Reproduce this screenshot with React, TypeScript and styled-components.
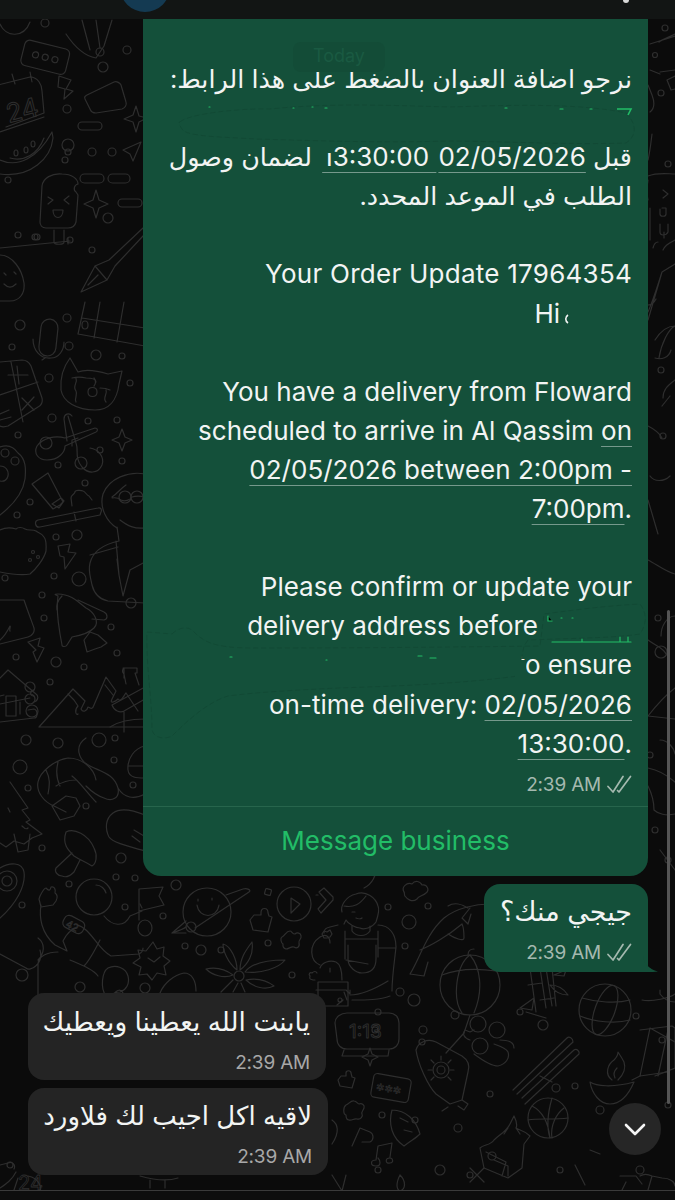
import React from "react";
import styled, { createGlobalStyle } from "styled-components";

const Global = createGlobalStyle`
  html, body { margin: 0; padding: 0; background: #0b0b0b; }
  #root { width: 675px; height: 1200px; overflow: hidden; }
`;

const TEXT_STACK = `Inter, "DejaVu Sans", sans-serif`;
const GREEN = "#14503a";

const Screen = styled.div`
  position: relative;
  width: 675px;
  height: 1200px;
  overflow: hidden;
  background: #0b0b0b;
  display: flex;
  flex-direction: column;
  font-family: ${TEXT_STACK};
`;

const WallpaperArt = styled.svg`
  position: absolute;
  inset: 0;
  width: 675px;
  height: 1200px;
  fill: none;
  stroke: #2e2e2e;
  stroke-width: 1.2;
  stroke-linejoin: round;
  stroke-linecap: round;
`;

const TopBar = styled.header`
  position: relative;
  z-index: 1;
  flex: none;
  height: 19px;
  background: #121514;
  overflow: hidden;
  display: flex;
  justify-content: space-between;
  padding: 0 46px 0 120px;
`;

const Avatar = styled.div`
  width: 50px;
  height: 50px;
  margin-top: -38px;
  border-radius: 50%;
  background: #143a52;
`;

const TopGlyph = styled.div`
  width: 6px;
  height: 3px;
  border-radius: 0 0 3px 3px;
  background: #d8d8d8;
`;

const Thread = styled.main`
  position: relative;
  z-index: 1;
  flex: 1;
  display: flex;
  flex-direction: column;
`;

const Bubble = styled.div<{ $out?: boolean; $w: number; $h: number; $gap: number }>`
  position: relative;
  box-sizing: border-box;
  width: ${(p) => p.$w}px;
  height: ${(p) => p.$h}px;
  margin-top: ${(p) => p.$gap}px;
  margin-left: ${(p) => (p.$out ? "auto" : "28px")};
  margin-right: ${(p) => (p.$out ? "27px" : "0")};
  border-radius: ${(p) => (p.$out ? "16px 16px 4px 16px" : "16px")};
  padding: 8px 16px 0;
  background: ${(p) => (p.$out ? GREEN : "#242424")};
  color: #f2f4f3;
`;

const TemplateBubble = styled.article`
  position: relative;
  width: 505px;
  height: 857px;
  margin-left: 143px;
  border-radius: 0 0 18px 18px;
  background: ${GREEN};
  color: #f2f4f3;
  display: flex;
  flex-direction: column;
`;

const TemplateBody = styled.div`
  flex: 1;
  padding: 40px 16px 0;
`;

const Line = styled.div<{ $track?: number }>`
  height: 39.1px;
  line-height: 39.1px;
  font-size: 26px;
  letter-spacing: ${(p) => p.$track ?? 0}px;
  text-align: right;
  white-space: nowrap;
`;

const ArabicLine = styled(Line)`
  font-size: 25.4px;
`;

const DateLink = styled.span`
  display: inline-block;
  direction: ltr;
  font-size: 26px;
  white-space: pre;
  text-decoration: underline;
  text-decoration-color: rgba(255, 255, 255, 0.42);
  text-decoration-thickness: 1px;
  text-underline-offset: 6px;
`;

const InlineGap = styled.span<{ $w: number }>`
  display: inline-block;
  width: ${(p) => p.$w}px;
`;

const Meta = styled.div<{ $tone: string; $top?: number }>`
  display: flex;
  justify-content: flex-end;
  align-items: center;
  gap: 6px;
  height: 24px;
  margin-top: ${(p) => p.$top ?? 0}px;
  font-size: 19px;
  letter-spacing: -0.2px;
  color: ${(p) => p.$tone};
`;

const ChatText = styled.div<{ $size: number }>`
  height: 40px;
  line-height: 40px;
  font-size: ${(p) => p.$size}px;
  text-align: right;
  white-space: nowrap;
`;

const ActionRow = styled.button`
  flex: none;
  height: 70px;
  padding: 0 0 2px;
  border: 0;
  border-top: 1px solid #27654c;
  background: none;
  color: #22bd67;
  font: 400 26px ${TEXT_STACK};
`;

const TodayChip = styled.div`
  position: absolute;
  left: 150px;
  top: 23px;
  width: 92px;
  height: 30px;
  line-height: 28px;
  text-align: center;
  border-radius: 8px;
  background: #134c37;
  color: #1a5a42;
  font-size: 18px;
`;

const BubbleInk = styled.svg`
  position: absolute;
  left: 0;
  top: 0;
  width: 505px;
  height: 857px;
  pointer-events: none;
`;

const Tail = styled.svg`
  position: absolute;
  right: -11px;
  bottom: 0;
  width: 16px;
  height: 16px;
`;

const BottomBar = styled.footer`
  position: relative;
  z-index: 1;
  flex: none;
  height: 9px;
  border-top: 1px solid #3a3a3a;
  background: #0d0d0d;
`;

const ScrollThumb = styled.div`
  position: absolute;
  z-index: 2;
  right: 5px;
  top: 610px;
  width: 3px;
  height: 494px;
  border-radius: 2px;
  background: #555;
`;

const JumpButton = styled.button`
  position: absolute;
  z-index: 3;
  left: 609px;
  top: 1103px;
  width: 52px;
  height: 52px;
  padding: 0;
  border: 0;
  border-radius: 50%;
  background: #262626;
  display: flex;
  align-items: center;
  justify-content: center;
`;

/* small ring dots scattered between the doodles */
const rings: [number, number, number][] = [
  [45, 23, 4], [100, 52, 4], [127, 50, 4], [103, 67, 5], [67, 109, 4], [68, 145, 6], [68, 152, 3], [92, 152, 4], [112, 152, 4],
  [65, 160, 3], [108, 218, 5], [92, 250, 3], [18, 235, 3], [8, 180, 3], [35, 237, 3], [70, 240, 3], [37, 237, 3],
  [20, 325, 5], [12, 347, 3], [67, 318, 4], [69, 346, 4], [96, 355, 5], [122, 356, 3], [49, 378, 4], [52, 418, 4], [88, 421, 3],
  [117, 420, 3], [100, 450, 3], [18, 435, 3], [122, 461, 3], [58, 465, 3], [85, 483, 3], [30, 502, 3], [17, 515, 3], [130, 383, 3],
  [56, 537, 3], [77, 535, 5], [54, 576, 3], [79, 579, 7], [5, 578, 3], [42, 595, 3], [44, 618, 3], [111, 627, 3], [131, 603, 5], [16, 657, 3],
  [56, 662, 5], [84, 667, 3], [50, 682, 3], [117, 653, 3], [26, 740, 5], [58, 743, 5], [115, 738, 3], [99, 740, 7], [114, 760, 3],
  [20, 767, 7], [28, 788, 3], [133, 785, 3], [86, 806, 3], [42, 848, 3], [121, 858, 5], [116, 877, 3], [135, 878, 3], [69, 884, 3],
  [22, 905, 3], [125, 907, 3], [163, 916, 3], [176, 885, 5], [221, 950, 3], [185, 946, 3], [201, 950, 5], [268, 943, 3], [292, 975, 3],
  [22, 975, 6], [80, 987, 5], [145, 988, 5], [388, 907, 3], [409, 922, 7], [405, 946, 3], [428, 906, 3], [400, 992, 4], [323, 1010, 2],
  [378, 1012, 3], [414, 1000, 6], [423, 1030, 4], [455, 1015, 4], [520, 1012, 3], [543, 1025, 5], [422, 1042, 3], [636, 1016, 3],
  [490, 1094, 3], [556, 1088, 4], [575, 1086, 3], [382, 1115, 3], [415, 1120, 3], [458, 1128, 4], [375, 1030, 3], [600, 1110, 4],
  [378, 1170, 3], [440, 1170, 5], [470, 1175, 3], [560, 1170, 3], [640, 1170, 4], [665, 28, 3], [661, 93, 3], [668, 164, 3], [661, 370, 3], [663, 436, 3],
  [658, 618, 3], [661, 652, 6], [650, 755, 3], [655, 830, 3], [668, 860, 3], [662, 1040, 3], [668, 1105, 3], [10, 1165, 3], [340, 1000, 2],
];

function Wallpaper() {
  return (
    <WallpaperArt viewBox="0 0 675 1200" aria-hidden="true">
      {rings.map(([x, y, r], i) => (
        <circle key={i} cx={x} cy={y} r={r} />
      ))}

      {/* top of the left column */}
      <path d="M0 24c6 14 24 14 30-2M66 34c8 12 18 22 30 24l8-12 8-26M82 20l8 30M96 20l4 28" />
      <g transform="rotate(14 44 58)">
        <rect x="22" y="44" width="46" height="26" rx="5" />
        <circle cx="35" cy="57" r="3" /><circle cx="45" cy="57" r="3" /><circle cx="55" cy="57" r="3" />
      </g>
      <path d="M-2 85l32-8c8 0 12 8 12 14l2 22-38 14M12 74l3 10M30 72l2 10M0 132l44-15" />
      <text x="6" y="120" fontSize="26" fontFamily="Inter, sans-serif" transform="rotate(-14 20 110)" strokeWidth="1">24</text>
      <path d="M59 76l12 4-5 9 7 2-9 8 1-10-7-2z" />
      <path d="M87 95l27-13c3-1 6 1 7 3l5 17c1 3-1 6-4 7l-26 4c-3 0-5-1-6-4l-5-10c-1-2 0-3 2-4z" />
      <path d="M136 106l3 10 8 2-8 4-3 10-3-10-9-3 9-4z" />
      <rect x="78" y="122" width="24" height="8" rx="4" />
      <path d="M0 160c18 8 38-2 52-28l1 6c-2 20-22 40-53 36M10 158c14 4 28-4 34-20" />
      <ellipse cx="16" cy="153" rx="2" ry="3" /><ellipse cx="26" cy="150" rx="2" ry="3" /><ellipse cx="33" cy="144" rx="2" ry="3" />
      <path d="M123 150l18-8-8 19-3-7z" />

      {/* popsicle and sparkle */}
      <path d="M40 222l2-36c1-8 10-13 20-12 10 0 16 5 16 10-4 1-5 6-2 8l2 3-2 27c-1 4-4 6-8 6H46c-4 0-6-3-6-6zM54 230v12c0 3 10 3 10 0v-12" />
      <path d="M48 197l5 3-5 4M69 196l-5 4 5 4M53 210h10c0 10-10 10-10 0z" />
      <path d="M96 190l3 10 9 4-9 4-3 10-3-10-9-4 9-4z" />
      <rect x="80" y="174" width="24" height="9" rx="4.5" /><rect x="108" y="174" width="22" height="9" rx="4.5" />
      <rect x="118" y="199" width="24" height="8" rx="4" />

      {/* fountain pen and smile */}
      <path d="M143 228l-34 32-14 6-14 26 26-12 8-14 28-30M95 266l12 14M88 285l10-10" />
      <path d="M0 255c12 0 22 14 24 28 1 10-4 18-14 18H0M4 273l2 2M14 272l2 2M4 284c4 4 8 4 12 0" />
      <path d="M0 248l70-7M68 244v-6" />

      {/* grid window and microphone */}
      <path d="M78 334l7-32M78 334l67 12M100 302l-6 36M124 302l-7 40M82 318l63 10" />
      <ellipse cx="85" cy="325" rx="3" ry="4" />
      <rect x="40" y="319" width="17" height="37" rx="8.5" transform="rotate(6 48 337)" />
      <path d="M33 339c0 12 8 20 18 19 8 0 13-8 13-16M45 358l-3 2" />

      {/* calculator */}
      <path d="M0 362l22-2c4 0 7 2 9 6l11 32c1 4-1 8-4 9l-30 19c-3 1-6 1-8 0M0 395l38-13M11 362l12 60M8 375h20M17 366l2 18M22 398l12 12M34 397l-12 13M0 414l9-4M0 420l11-3" />

      {/* cat */}
      <path d="M70 358c-6 8-10 20-9 32 2 12 16 20 34 20 14 0 22-10 24-26l3-13-14 3c-10-3-22-5-30-2z" />
      <path d="M72 378c4-1 10-1 14 0M76 378c2 5-4 8 0 13 2 4-2 7 0 11M100 388c4 0 8 1 10 2M106 390c2 4-4 8 0 12M86 378c4 0 10 0 10 4M88 392c0-6 9-6 9 0s-9 6-9 0zM94 378c2 2 2 6 0 8" />

      {/* scissors */}
      <path d="M68 416l8 27c3 8-2 14 6 24 6 7 16 7 20-2 3-8-4-16-12-17M72 416c-3-4-8-2-8 3l3 22" />
      <circle cx="81" cy="463" r="6" />
      <path d="M96 432c2-1 2-4-1-4l-30 10c-10-3-22 0-28 8-4 8 2 14 10 14 12 0 18-8 18-14z" />
      <circle cx="46" cy="443" r="6" />
      <path d="M72 446v-6l6-2" />
      <path d="M122 429l3 8 7 3-7 3-3 8-3-8-7-3 7-3z" />

      {/* paw */}
      <path d="M0 447c8-3 14 0 18 6 8 6 8 16 7 26-2 14-12 26-25 36" />
      <circle cx="5" cy="453" r="4" /><circle cx="15" cy="461" r="4" /><path d="M0 466c6 0 9 5 8 10-1 4-4 6-8 5" />

      {/* tube and toothbrush */}
      <path d="M32 484l16-11 15 29-3 3-7 4zM52 504l7 4 5-7-3-3z" />
      <path d="M38 520l60-12c3-1 4 2 3 4l-1 3-60 12c-5 1-6-6-2-7zM72 506l-1-8c0-3 3-3 4-6 0-2 6-2 8-1 3 1 3 4 6 5l3 4M74 512l2 9" />

      {/* man with glasses */}
      <path d="M145 474c-16-3-36 4-42 20-4 14 4 28 14 34M112 497c6-4 8-8 14-12M112 498c5-1 9 2 9 2 4 2 9 0 11-3 3-1 9-1 13 0M120 520c8 6 14 9 25 8" />
      <circle cx="125" cy="497" r="6" /><circle cx="137" cy="497" r="6" />
      <path d="M117 527l2 14c-14 3-26 10-29 22-2 8 0 12 2 22 2 8 6 14 16 16l37 2M90 555l28-8M116 541l3 34 4 21 7-26 15-8M119 575l-2-16" />

      {/* taco and bolt */}
      <path d="M0 530c4-2 10-3 16-1 2-2 6-2 9 0s8 0 11 2c2 2 6 2 8 6 3 4 2 10 2 14-2 8-10 18-16 23-10 2-20 0-30-2" />
      <circle cx="33" cy="552" r="1.5" /><circle cx="38" cy="557" r="1.5" /><circle cx="30" cy="560" r="1.5" />
      <path d="M58 546l12-2-2 8 8 1-11 16-1-12-4-1z" />

      {/* boot */}
      <path d="M0 600h24c4 12 8 22 10 28 1 4-2 8-6 9-8 2-16 4-28 7M0 640c5-4 8-10 10-14 1 0-1 4 0 5" />
      <path d="M28 642l12-4-2 8 6 2-5 10-2 4-4-10 3-2z" />

      {/* rocket */}
      <path d="M58 596c-2 12 0 26 2 38l2 11c0 2 4 2 5 0l5-8c6-1 16-3 22-9 6-6 0-16-8-20-6-4-14-14-28-14-4 0-4 0 0 2zM78 600l26 12c4 2 4 7 0 8l-12-1M90 632l-6 8 3 12 8-3 6-2 6-4-9-8-8-3z" />
      <path d="M62 596c-4 4-6 8-5 14" />

      {/* log cabin */}
      <path d="M0 678l8-8 28 24c3 2 2 7-2 8M34 690c-4 0-5 6 0 6M0 704l30-6M0 722l34-4c4 0 4-8 0-9l-6 1M6 696h10v20H6zM20 702v12M0 696l4-1" />
      <circle cx="30" cy="687" r="5" /><circle cx="32" cy="711" r="6" /><circle cx="30" cy="699" r="5" />

      {/* mountains */}
      <path d="M39 727l34-38 12 12-4 8c2 4 6 2 7-2 2 0 4 4 6-2l12-28 10 14-4 8c-3 6 4 2 6 0 3 4 6-4 8-6l12 18M39 727h106M68 694l6 6 4 6c-4 4-2 10 0 8M105 685l8 10" />
      <path d="M112 705l33-18M112 705c2 6 8 8 12 6l21-12M123 668h14v5h-2l4 12M124 668v10M124 668c-2 2-2 4 0 6l2 10M124 712v20M110 727c6-4 18-8 35-8" />

      {/* swirl and shrimp */}
      <path d="M86 738c-12 8-8 22 4 28 12 6 24 8 28 22 2 10-6 14-14 10-6-2-12-6-18-12M118 788c6 10 16 12 27 6" />
      <path d="M145 746c-10 2-18 12-17 24 1 8 9 8 17 8M128 766h17" />
      <path d="M96 780c-2-12-14-22-28-22-14 2-28 14-30 24-2 10 6 20 16 24l12 6M56 786c6-4 14-6 20-6M46 770c4 8 4 14 2 24M58 762c-2 8-2 16 2 24M72 776c8 6 16 18 24 26M52 806l8 14 14-4 6-10-4-8-10-2z" />

      {/* pine tree */}
      <path d="M10 782l18 26-6 2 8 10-4 2 16 12-10 4-8 6-10-3-8 6-6-4M14 834l4 18 10-2 2-16M8 808l2 4M22 826c2 2 4 4 6 2" />

      {/* mushroom and oval */}
      <path d="M66 832c8-4 22 2 28 16 4 8 2 16-2 18-6-4-12-6-18-10-6-6-12-12-8-24zM72 853l-16 15c-2 4 2 8 6 8 4 2 8 0 12-4l6-12" />
      <path d="M145 815c-12-5-24-8-32-2-8 6-8 16-4 24 4 6 22 10 36 14M132 836l8 6M134 830l10 6" />

      {/* leaf with target */}
      <path d="M0 868c10-6 22-6 24 4 2 14-8 32-24 46" />
      <circle cx="7" cy="881" r="10" /><circle cx="7" cy="881" r="5" />

      {/* astronaut */}
      <circle cx="94" cy="897" r="18" />
      <path d="M96 885c5 0 9 4 10 8M40 896c2-4 4-8 6-8 2 2 4 4 5-1 3-1 5 2 4 6 3 2 2 6 1 8l-3 4-12 2-2-8zM41 905c-2 12 0 28 14 40l12 6-4-10c4-8 8-12 14-13M77 925c14 3 20 24 34 31l28-2c4-2 4-5 4-6M104 916c8 10 20 12 26 0l12-5M142 908l-2-4" />
      <ellipse cx="145" cy="928" rx="7" ry="8" />
      <rect x="63" y="918" width="22" height="13" rx="5" transform="rotate(28 74 924)" />
      <text x="67" y="930" fontSize="10" fontFamily="Inter, sans-serif" transform="rotate(28 74 924)" strokeWidth="0.7">42</text>
      <path d="M70 960c14 6 24 10 28 16M40 950c4 14-10 22-14 18l-26-14M38 938c8 6 6 16 0 22M100 940c-4 8-10 20-16 26M38 1000v-36c0-8 10-12 20-12" />
      <path d="M139 920v-31l24-2-4 9 5 9-25 6" />

      {/* ringed planet */}
      <circle cx="207" cy="912" r="24" />
      <path d="M198 899v2M212 898v2M197 905c2 14 20 14 22 0" />
      <path d="M172 933c6-2 12-4 14-6M195 928l54-36c3-2-2-4-6-3l-17 6M172 933l14-12M172 933h14" />
      <circle cx="191" cy="927" r="5" />
      <path d="M250 920l4-5h7v-2c0-6 7-6 7 0l1 3 3 1-4 15-15-2z" /><rect x="265" y="889" width="6" height="6" rx="1" transform="rotate(16 268 892)" />
      <circle cx="294" cy="904" r="17" /><path d="M291 898l9 6-9 9z" />
      <path d="M319 892l5-4 9 9 0 3-12 13-3-4 8-9-7-8zM318 895h-2" />
      <path d="M282 937c3-1 4-6 8-6 2 0 2 3 5 3 2-2 6-1 6 2 1 3-3 4-2 7 1 4-2 6-5 4-3-1-5 2-8 2-4-1-3-4-3-5-2-1-3-6-1-7z" />
      <path d="M153 942l4 7 7-2-1 9 7 5-6 5 2 9-9-2-5 7-5-6-8 1 2-8-8-4 7-5-2-8 8 1zM148 958l6 4 6-5" />
      <path d="M108 968c8-4 18 0 20 8 2 8-2 14-8 16-4 0-8 2-10 4M108 968c-6 4-8 20-2 28M113 995c4-6 8-6 10-2" />
      <path d="M160 993c4-10 14-18 24-20 8 0 12 8 12 18" />

      {/* flower */}
      <circle cx="239" cy="976" r="5" />
      <path d="M237 970c-10-8-14-20-14-26 8 2 14 16 14 26zM240 970c0-12 6-20 12-28 2 12-4 22-12 28zM245 972c6-8 20-12 40-12-6 8-24 14-40 12zM233 975c-8-6-18-8-27-6 6 6 18 10 27 6zM246 980c10-2 20 0 28 6-8 4-20 2-28-6zM233 980c-4 4-8 8-12 12M238 983l-5 9M241 983l4 9" />

      {/* gardener */}
      <path d="M342 912c-2-6 4-16 14-18 10-4 20 4 22 12 2 4 0 10-2 16-4 6-12 8-16 6-4 0-12-4-14-8l-2 4M344 906c10 2 16-2 22-10M352 912h3M356 918c2 1 5 1 6 0M364 888c8-4 14-14 10-20-2-4-6-4-10-2" />
      <path d="M352 926v5c4 6 14 6 18 0v-5M338 925l-8 2c-4 1-6 2-6 6M378 925c12 0 18 10 18 22-1 10-4 30-4 44M345 931v28M378 931v26M345 939h33M348 945v14c0 8 8 14 14 14 8 0 14-4 14-14v-14M346 960l22 4M378 948l18 0" />
      <path d="M320 965c-10-4-12-20 0-28 6-4 10 0 10 6M324 938l-2-4 2-3 3 1 3-2 2 4-2 3-3 1z" />
      <path d="M320 968c2-6 10-8 16-6 4 2 6 10 6 18M330 968v4M316 990h30l4 4v-4M315 980h-2c-2-1-4 0-3-4-2-2 0-4 2-3 2-2 4-2 5 0" />
      <path d="M318 982h30v24h-30zM350 995c14 0 28-8 38-14M352 1000c14 0 28 0 38-4" />

      {/* cloud, dolphin, lantern */}
      <path d="M404 892c-3-5 3-10 8-8 3-4 8-3 10 1 5-1 8 5 4 8-3 3-8 3-9 6-5 4-10 0-12-3-1 0 0-3-1-4z" />
      <path d="M410 974c10-16 16-40 34-56 12-10 32-14 46-14M448 906c6-4 14-2 20 2M470 908l-8 10 6 6 3-10M420 950c10-4 28-14 42-26 2 4 2 8 2 14 0 4-10 0-16-4M410 974l14 2 4-14" />
      <ellipse cx="470" cy="985" rx="30" ry="30" />
      <path d="M470 955c-14 10-18 44-8 58M470 955c10 12 14 34 4 58M442 975c10-4 26-8 54-4M468 955c0-6 4-6 6-6M470 1015l-6 18-18 20" />

      {/* bamboo */}
      <path d="M530 968l6 44M540 968l6 40M546 968l6 38M552 968l4 38M528 985l14-2M540 1000l14-2M554 975l12-5-2 6zM520 1008l14-10-2 12zM550 985c8 0 14 4 18 10-8 0-14-4-18-10zM526 1012l20 6M530 970c10-4 14-2 18 0" />

      {/* globe */}
      <circle cx="605" cy="1010" r="26" />
      <ellipse cx="605" cy="1010" rx="10" ry="26" transform="rotate(20 605 1010)" />
      <path d="M582 998c14 4 34 6 48 2M580 1016c14 6 36 8 50 4" />
      <path d="M650 1028l25 14M650 1028l-10 48 28-4M668 1030l-10 46M642 1000c10 2 28-2 33-6" />
      <path d="M660 990v4c3 4 8 8 15 8" />

      {/* alarm clock */}
      <path d="M347 1013h42c6 0 10 4 10 10v16c0 6-4 10-10 10h-42c-6 0-10-4-10-10l-2-16c0-6 6-10 12-10zM344 1050l-2 6h46l1-6M337 1005l6-5M347 1000l-3-8" />
      <text x="349" y="1038" fontSize="19" fontFamily="Inter, sans-serif" strokeWidth="0.9">1:13</text>

      {/* sunscreen, group, chopsticks */}
      <path d="M416 1050c2-8 12-12 20-8l26 14c6 4 8 10 6 16l-6 28-12 4-14-10c-8-8-18-30-20-44zM462 1100l6 4-4 6-6-4M448 1107l-6 4" />
      <circle cx="441" cy="1070" r="8" /><circle cx="441" cy="1070" r="4" />
      <path d="M441 1056v4M454 1070h-4M428 1070h4M431 1060l3 3M451 1060l-3 3M431 1080l3-3M451 1080l-3-3" />
      <circle cx="478" cy="1024" r="8" /><circle cx="497" cy="1030" r="8" /><circle cx="480" cy="1046" r="8" />
      <path d="M470 1040c-6-2-8-6-5-10l5 2 4-2M474 1054c8 6 18 12 24 12 8-2 12-8 10-14-2-4-8-6-14-8M500 1040c8 0 14 2 14 8" />
      <path d="M513 1090l54-52c2-2 6 0 6 4l-56 52M522 1098l52-48c3-2 6 2 5 4l-54 50M540 1076l12 6" />
      <path d="M640 1030l32-4 3 2v40l-20 8M640 1076l-8 4" />
      <path d="M590 1082c6 4 22 6 44 0-6 14-14 22-24 22-10 0-18-10-20-22zM612 1080c-8-6-4-16 2-20 4-4 4-8 4-8s4 6 6 10c2 6 0 12-6 18M615 1078c-2-4 0-8 2-10" />

      {/* small items beside the left bubbles */}
      <path d="M370 1048l2 6 6 3-6 3-2 6-2-6-6-3 6-3z" />
      <path d="M338 1080l3-4h5v-3c0-3 5-3 5 0l1 4 3 1-3 10-12-2z" />
      <rect x="372" y="1076" width="38" height="24" rx="4" transform="rotate(10 391 1088)" />
      <text x="376" y="1098" fontSize="17" fontFamily="Inter, sans-serif" strokeWidth="0.7" transform="rotate(10 391 1088)">***</text>
      <path d="M346 1105c3-1 5-5 8-4 3 0 3 3 5 3 3-1 6 1 5 4-1 3-3 4-2 6s-1 6-5 5c-3-1-5 2-8 1-3 0-3-3-3-5-3-1-3-8 0-10z" />
      <path d="M392 1110c-4 14 0 28 12 36M392 1110c14 0 24 10 28 24-4 4-8 6-16 12M400 1118l8 4M404 1130l8 2" />
      <path d="M332 1120c6 4 8 12 0 24" />
      <path d="M352 1146l8-18 10 4c4 2 4 8 0 10l-8 0" />
      <path d="M376 1160l2-14 14-3-2 14M376 1160c-6 0-6 6 0 6s4-6 2-8M390 1158c-5 0-5 6 0 5 4 0 3-5 0-5z" />

      {/* hut and basketball */}
      <path d="M480 1148c4-4 10-2 14-8 6-6 12-8 16-16l4-8c2 4 4 8 2 12 2 2 8 2 14 8l-6 8-2 24-14 10-24-10zM508 1128l-4 6M516 1128l4 6M486 1152l20 10-4 14M494 1160l14 6v10" />
      <circle cx="492" cy="1156" r="4" />
      <circle cx="548" cy="1118" r="20" />
      <path d="M532 1106c8 4 16 14 18 32M552 1098c-4 14-6 28-2 40M528 1120c10-2 26 0 40-2M564 1108c-8 6-14 18-12 30" />

      {/* lower edge */}
      <path d="M0 1165l8-2c4-2 8 2 6 6M0 1188c6-4 12-8 16-16M28 1176c12 2 14 14 12 14M18 1178l-4 12" />
      <text x="18" y="1190" fontSize="20" fontFamily="Inter, sans-serif" strokeWidth="0.8">24</text>
      <path d="M140 1176c14 4 26 6 38 2M150 1180v8M165 1180v8" />
      <path d="M332 1175l10 16M346 1175l-4 16M400 1175c-4 8-4 14 0 16 6-2 6-10 0-16M470 1168l14 14M484 1168l-14 14M620 1176h16l6 8M622 1190l4-8" />
      <path d="M640 1176c3-2 8-2 12 0l10 2c8 0 13 4 13 8M652 1176l-4 14" />
      <path d="M575 1165l10 20M590 1150l10 4" />

      {/* right-hand strip */}
      <path d="M675 34c-6 3-14 6-16 8M650 44l25-8M650 70l10 4M660 72l15-2" />
      <circle cx="655" cy="55" r="2.5" />
      <path d="M675 76l-8 4 4 10 4-1M648 85l4 10c3 8 2 14-2 17M652 134c-1 8-2 18-4 26" />
      <path d="M648 176c10-4 20-2 27-2M650 240v-32M648 180c-2 12 0 20 0 20M653 248c1-4 2-6 5-6M675 240c-8 4-10 6-12 10M664 232v6M663 190l5 4-5 4M662 208h4v6c0 3-6 3-6 0v-5M660 224v8c0 4 6 4 8 0v-8" />
      <path d="M648 320l14-48 13-8M662 272c-4 12-8 26-14 40M648 305c4 0 6-2 8-6M655 340c5-8 12-14 20-14c-6 2 -14 18 -16 32M655 358c6 2 14 0 16-8M675 380c-8 6-12 10-12 18M670 396l-8 10M648 426c8 4 12 8 14 12" />
      <path d="M650 476c4 6 14 6 20 0M648 500l10 34M648 560c8 4 18 12 27 14M675 616c-8 0-14 10-14 20M648 640c8 6 16 8 18 14M675 688c-8 6-16 14-27 28l27 3M660 740c8 0 14 8 15 14M648 768c10 2 18 6 27 14M648 786c4 8 6 16 6 24 4 4 12 6 21 4M660 850l15 20" />
    </WallpaperArt>
  );
}

function ReadTicks({ tone }: { tone: string }) {
  return (
    <svg width="25" height="19" viewBox="0 0 25 19" fill="none" stroke={tone} strokeWidth="1.7" strokeLinecap="round" strokeLinejoin="round">
      <path d="M1 11.5l5 5.5L16 1.5" />
      <path d="M10.5 15.5l1.5 1.5L23.5 1.5" />
    </svg>
  );
}

/* painted-over parts of the template message */
function TemplateInk() {
  return (
    <BubbleInk viewBox="143 19 505 857" aria-hidden="true">
      <g fill={GREEN} stroke="#114733" strokeWidth="0.8" strokeDasharray="5 3">
        <path d="M180 122c8-8 60-14 90-13 60-6 110-4 180-2 60-2 130-4 176 6 10 10 12 22 0 30-60 2-130-2-180-2-60 2-120 0-190-2-30-2-70-2-74-10-3-4-3-8-2-7z" />
        <path d="M172 634c6-6 14-8 20-4 10 10 18 18 60 18 60 0 130 0 288-2l4-32c30-4 60-8 96-10 6 8 8 18 0 30-26 4-60 4-112 6l-4 6-6 30c-60 8-120 10-180 12-40 2-80 4-110 8-20 6-40 24-56 40-8 4-20 2-20-8 0-30-6-60-5-96z" />
      </g>
      <path d="M617 109h14l-3 6" fill="none" stroke="#22bd67" strokeWidth="1.6" />
      <g stroke="#22bd67" strokeWidth="1.2" strokeLinecap="round">
        <path d="M209 107h1M293 108h1M312 107h1M325 108h2M505 108h2M560 109h3M590 109h2" />
        <path d="M548 616v5h4M561 618h1M572 618h1M552 642h79M582 639v3M620 637v5M628 637v5" />
        <path d="M230 657h2M326 660h1M418 656h4M430 658h6" />
      </g>
      <path d="M568 315c-3 2-3 6 0 8" fill="none" stroke="#f2f4f3" strokeWidth="1.6" />
      {/* strokes that clip the start of the time and of the word after the gap */}
      <path d="M319 146h7v21h-7zM326 146h8v7h-8zM515 660h11v20h-11z" fill={GREEN} />
    </BubbleInk>
  );
}

export default function App() {
  return (
    <Screen>
      <Global />
      <Wallpaper />
      <TopBar>
        <Avatar />
        <TopGlyph />
      </TopBar>
      <Thread>
        <TemplateBubble>
          <TemplateBody>
            <ArabicLine dir="rtl">نرجو اضافة العنوان بالضغط على هذا الرابط:</ArabicLine>
            <Line />
            <ArabicLine dir="rtl">
              قبل <DateLink>02/05/2026</DateLink><InlineGap $w={2} /><DateLink>{"13:30:00\u00a0"}</DateLink><InlineGap $w={3} /> لضمان وصول
            </ArabicLine>
            <ArabicLine dir="rtl">الطلب في الموعد المحدد.</ArabicLine>
            <Line />
            <Line $track={0.25}>Your Order Update 17964354</Line>
            <Line>Hi<InlineGap $w={72} /></Line>
            <Line />
            <Line>You have a delivery from Floward</Line>
            <Line>scheduled to arrive in Al Qassim <DateLink>on</DateLink></Line>
            <Line><DateLink>02/05/2026 between 2:00pm -</DateLink></Line>
            <Line><DateLink>7:00pm</DateLink>.</Line>
            <Line />
            <Line>Please confirm or update your</Line>
            <Line>delivery address before<InlineGap $w={94} /></Line>
            <Line>to ensure</Line>
            <Line>on-time delivery: <DateLink>02/05/2026</DateLink></Line>
            <Line><DateLink>13:30:00</DateLink>.</Line>
            <Meta $tone="#a4b9af" $top={10}>
              2:39 AM <ReadTicks tone="#a4b9af" />
            </Meta>
          </TemplateBody>
          <ActionRow>Message business</ActionRow>
          <TodayChip>Today</TodayChip>
          <TemplateInk />
        </TemplateBubble>

        <Bubble $out $w={164} $h={88} $gap={8}>
          <ChatText $size={27} dir="rtl">جيجي منك؟</ChatText>
          <Meta $tone="#a4b9af" $top={8}>
            2:39 AM <ReadTicks tone="#a4b9af" />
          </Meta>
          <Tail viewBox="0 0 16 16" aria-hidden="true">
            <path d="M0 0c1 8 6 13 15 15.5-5 .6-11 .5-15 .5z" fill={GREEN} />
          </Tail>
        </Bubble>

        <Bubble $w={298} $h={87} $gap={21}>
          <ChatText $size={26.4} dir="rtl">يابنت الله يعطينا ويعطيك</ChatText>
          <Meta $tone="#a8a8a8" $top={9}>2:39 AM</Meta>
        </Bubble>

        <Bubble $w={300} $h={87} $gap={8}>
          <ChatText $size={26} dir="rtl">لاقيه اكل اجيب لك فلاورد</ChatText>
          <Meta $tone="#a8a8a8" $top={8}>2:39 AM</Meta>
        </Bubble>
      </Thread>
      <BottomBar />
      <ScrollThumb />
      <JumpButton aria-label="Scroll to latest">
        <svg width="22" height="14" viewBox="0 0 22 14" fill="none" stroke="#f4f4f4" strokeWidth="2.6" strokeLinecap="round" strokeLinejoin="round">
          <path d="M2 3l9 9 9-9" />
        </svg>
      </JumpButton>
    </Screen>
  );
}
